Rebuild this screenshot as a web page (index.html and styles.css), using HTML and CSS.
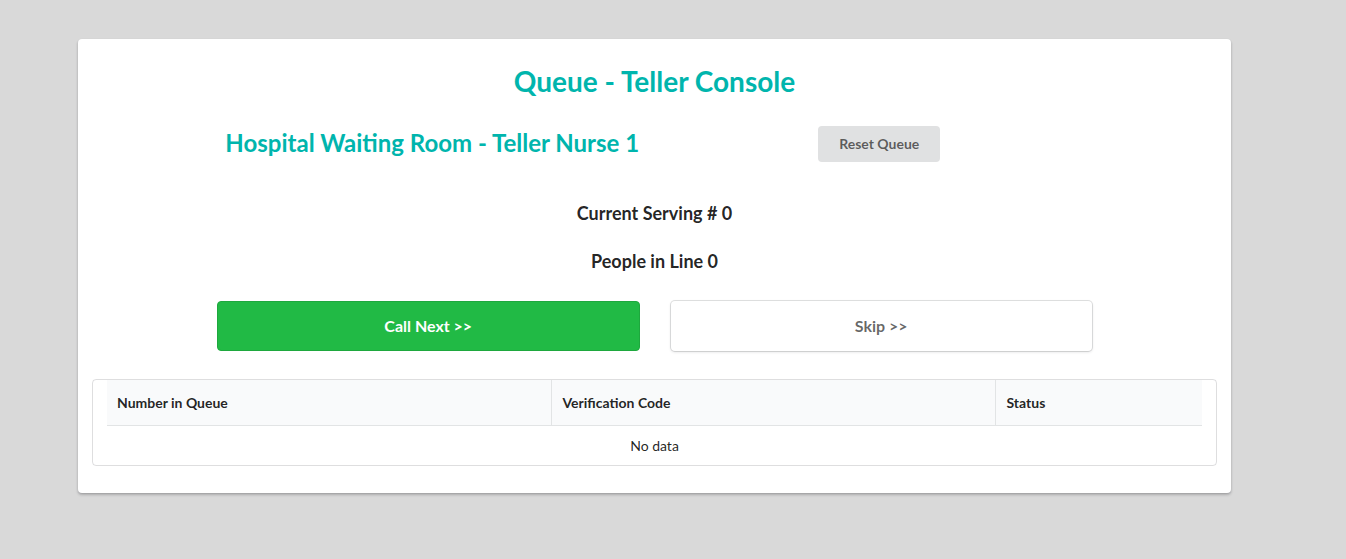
FILE: index.html
```html
<!DOCTYPE html>
<html lang="en">
<head>
    <meta charset="UTF-8">
    <meta name="viewport" content="width=device-width, initial-scale=1.0">
    <title>Queue - Teller Console</title>
    <link rel="stylesheet" href="styles.css">
</head>
<body>
    <div class="card">
        <h1 class="title">Queue - Teller Console</h1>

        <div class="row">
            <div class="col left">
                <h2 class="subtitle">Hospital Waiting Room - Teller Nurse 1</h2>
            </div>
            <div class="col right">
                <button class="button reset">Reset Queue</button>
            </div>
        </div>

        <h3 class="stat">Current Serving # 0</h3>
        <h3 class="stat">People in Line 0</h3>

        <div class="row actions">
            <div class="col left">
                <button class="button big green">Call Next &gt;&gt;</button>
            </div>
            <div class="col right">
                <button class="button big basic">Skip &gt;&gt;</button>
            </div>
        </div>

        <div class="segment">
            <table class="queue-table">
                <thead>
                    <tr>
                        <th class="c1">Number in Queue</th>
                        <th class="c2">Verification Code</th>
                        <th class="c3">Status</th>
                    </tr>
                </thead>
                <tbody>
                    <tr>
                        <td colspan="3" class="empty">No data</td>
                    </tr>
                </tbody>
            </table>
        </div>
    </div>
</body>
</html>
```

FILE: styles.css
```css
html, body {
    margin: 0;
    padding: 0;
}

body {
    font-family: Lato, "Open Sans", "Liberation Sans", sans-serif;
    font-size: 14px;
    color: rgba(0, 0, 0, 0.87);
    background: #d9d9d9;
    min-height: 559px;
    padding-top: 39px;
    box-sizing: border-box;
}

.card {
    width: 1153px;
    margin-left: 78px;
    background: #fff;
    border-radius: 4px;
    box-shadow: 0 1px 2px rgba(34, 36, 38, 0.15), 0 2px 3px rgba(34, 36, 38, 0.2);
    padding: 24px 14px 27px;
    box-sizing: border-box;
}

.title {
    margin: 0;
    text-align: center;
    font-size: 28px;
    line-height: 36px;
    font-weight: 700;
    color: #00b5ad;
}

.row {
    display: flex;
    width: 875px;
    margin: 0 auto;
}

.col {
    flex: 1;
    display: flex;
    justify-content: center;
    align-items: center;
}

.col.left {
    padding-right: 15px;
}

.col.right {
    padding-left: 15px;
}

.row:first-of-type {
    margin-top: 27px;
}

.subtitle {
    margin: 0;
    font-size: 24px;
    line-height: 32px;
    font-weight: 700;
    color: #00b5ad;
    position: relative;
    left: 4px;
    top: -1px;
}

.button {
    font-family: Lato, "Open Sans", "Liberation Sans", sans-serif;
    font-weight: 700;
    font-size: 14px;
    line-height: 14px;
    border: none;
    border-radius: 4px;
    cursor: pointer;
}

.reset {
    background: #e0e1e2;
    color: rgba(0, 0, 0, 0.6);
    padding: 11px 21px;
    margin-left: -3px;
}

.stat {
    margin: 0;
    text-align: center;
    font-size: 18px;
    line-height: 24px;
    font-weight: 700;
    color: rgba(0, 0, 0, 0.87);
}

.stat:first-of-type {
    margin-top: 39px;
}

.stat + .stat {
    margin-top: 24px;
}

.actions {
    margin-top: 28px;
}

.big {
    width: 100%;
    height: 50px;
    font-size: 16px;
}

.green {
    background: #21ba45;
    color: #fff;
    border: 1px solid #1ea83e;
}

.basic {
    background: #fff;
    color: rgba(0, 0, 0, 0.6);
    box-shadow: 0 0 0 1px rgba(34, 36, 38, 0.13), 0 1px 3px rgba(34, 36, 38, 0.15);
    width: calc(100% - 2px);
    margin-left: 1px;
}

.segment {
    margin-top: 28px;
    border: 1px solid rgba(34, 36, 38, 0.15);
    border-radius: 4px;
    padding: 0 14px;
}

.queue-table {
    width: 100%;
    table-layout: fixed;
    border-collapse: collapse;
    font-size: 14px;
}

.queue-table th {
    box-sizing: border-box;
    background: #f9fafb;
    text-align: left;
    font-weight: 700;
    color: rgba(0, 0, 0, 0.87);
    padding: 13px 10px;
    line-height: 19px;
    border-bottom: 1px solid rgba(34, 36, 38, 0.1);
}

.queue-table th + th {
    border-left: 1px solid rgba(34, 36, 38, 0.1);
    padding-left: 11px;
}

.c1 { width: 444px; }
.c2 { width: 444px; }

.empty {
    text-align: center;
    padding: 10px;
    line-height: 19px;
    color: rgba(0, 0, 0, 0.87);
}
```
